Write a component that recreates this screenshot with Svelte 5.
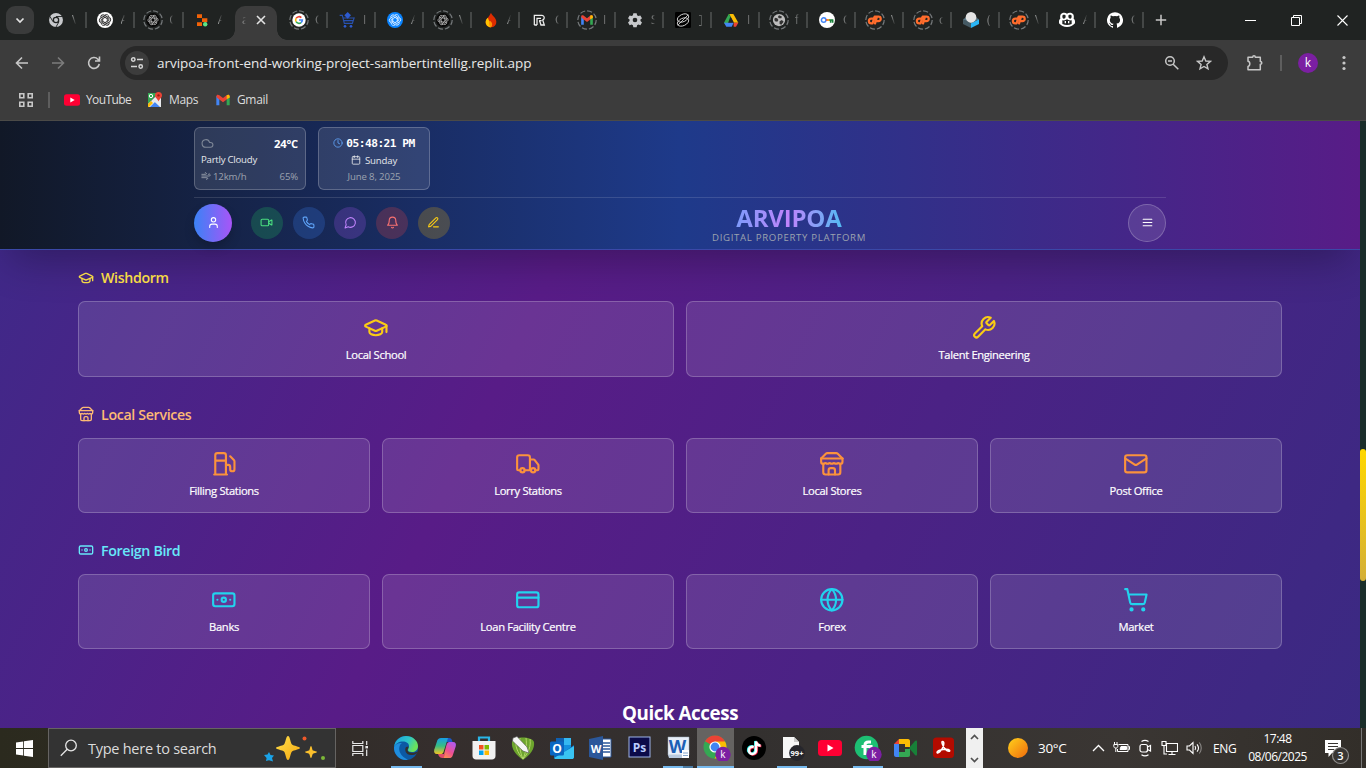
<script>
  const knot = (c, w = 1.3) => `<g fill="none" stroke="${c}" stroke-width="${w}" transform="translate(-1.8 -1.8) scale(1.150)">${[0, 60, 120, 180, 240, 300]
    .map((a) => `<path transform="rotate(${a} 12 12)" d="M12 5.600c2-1.600 5-.2 5 2.600v4.400l-5 2.800"/>`)
    .join('')}</g>`;
  const cp = `<path fill="none" stroke="#ff6c2c" stroke-width="2.800" stroke-linecap="round" stroke-linejoin="round" transform="translate(-2.200 -1.600) scale(1.200)" d="M9.400 9.600H7.200a3 3 0 0 0 0 6h1.600l2.600-8.400h4.800a2.700 2.700 0 0 1 0 5.600h-1.900M14.200 7.400l-2.300 8.200"/>`;
  const gmail = `<path fill="#4285f4" d="M2 20V6l4.500 3.500V20z"/><path fill="#34a853" d="M22 20V6l-4.500 3.500V20z"/><path fill="#ea4335" d="M2 6.500C2 4 4.500 3.300 6.500 4.800L12 9l5.500-4.200C19.500 3.300 22 4 22 6.500l-1 2.200-9 6.800-9-6.800z"/><path fill="#fbbc04" d="M22 6.500c0-2.500-2.500-3.200-4.500-1.700v5.700L22 8.500z"/>`;
  const chrome = (a, b, c, d, m) => `<circle cx="12" cy="12" r="11.500" fill="${b}"/><path fill="${a}" d="M12 12 2 6.250a11.500 11.500 0 0 1 20 0z"/><path fill="${c}" d="M12 6.500h10.100A11.500 11.500 0 0 1 11.500 23.500l5.300-9z"/><circle cx="12" cy="12" r="5.600" fill="${m}"/><circle cx="12" cy="12" r="4.400" fill="${d}"/>`;

  const fav = {
    chrome: `<circle cx="12" cy="12" r="7.700" fill="none" stroke="#c7c9cc" stroke-width="5.500"/><circle cx="12" cy="12" r="3" fill="#c7c9cc"/><path d="M12 6.800h9.500M7.500 14.600 2.800 6.400M16.500 14.600 11.800 22.800" stroke="#202322" stroke-width="1.400"/>`,
    gptw: `<circle cx="12" cy="12" r="12" fill="#fff"/>${knot('#333')}`,
    gptd: `<circle cx="12" cy="12" r="12" fill="#080808"/>${knot('#b5b5b5', 1.3)}`,
    gptb: `<circle cx="12" cy="12" r="12" fill="#0a84ff"/>${knot('#fff', 1)}`,
    replit: `<path fill="#f26207" d="M4.500 3.500H12V9H4.500zM12 9.500h8V15h-8zM4.500 15.500H12V21H4.500z"/><circle cx="16.800" cy="18.300" r="3.300" fill="#5be584"/>`,
    google: `<circle cx="12" cy="12" r="11.500" fill="#fff"/><g fill="none" stroke-width="2.800"><path stroke="#ea4335" d="M7 9.200a5.700 5.700 0 0 1 9-1.200"/><path stroke="#fbbc05" d="M7 14.800a5.700 5.700 0 0 1 0-5.600"/><path stroke="#34a853" d="M15.500 16.500A5.700 5.700 0 0 1 7 14.800"/><path stroke="#4285f4" d="M12 12h5.700a5.700 5.700 0 0 1-2.200 4.500"/></g>`,
    cart: `<path fill="none" stroke="#2851ae" stroke-width="1.700" d="M1 5h4l3 12h12l3-9M6.500 9h16M7.500 13h14"/><path fill="#2d5bd1" d="M13 0l5 5-5 5-5-5z"/><circle cx="9" cy="21.500" r="2" fill="#2d5bd1"/><circle cx="18" cy="21.500" r="2" fill="#2d5bd1"/>`,
    fire: `<path fill="#dd2c00" d="M12 1c1 4 8 7 8 13.500A8 8 0 0 1 12 23c-5 0-8-3.500-8-7.500C4 10 9 8 12 1z"/><path fill="#ffc400" d="M4 15c0-3 1.500-5 3.500-6.500C8 13 12 15 12 23c-5 0-8-4-8-8z"/><path fill="#ff9100" d="M10 13c4 2 5 6 2 10-3-1-4-7-2-10z"/>`,
    r: `<path fill="none" stroke="#eee" stroke-width="1.900" d="M5 19.500V5h11.500a3.500 3.500 0 0 1 3 5c-.6 1.500-2 2-2 2l2.500 7.500h-5l-2-6h-1M9 19.500v-10h6M5 19.500h4M12.500 13h3.500"/>`,
    gmail,
    gear: `<path fill="#c7c9cc" fill-rule="evenodd" d="M9.500 2h5l.6 3 2 1.100 2.900-1 2.500 4.300-2.300 2v2.200l2.300 2-2.500 4.300-2.900-1-2 1.100-.6 3h-5l-.6-3-2-1.100-2.900 1-2.500-4.300 2.300-2v-2.200l-2.300-2L4 5.100l2.900 1 2-1.100zM12 8.500a3.500 3.500 0 1 0 0 7 3.500 3.500 0 0 0 0-7z"/>`,
    sq: `<rect width="24" height="24" rx="2" fill="#000"/><g fill="none" stroke="#ddd" stroke-width="1.300"><ellipse cx="12" cy="9" rx="9" ry="5.500" transform="rotate(-25 12 9)"/><ellipse cx="12" cy="15" rx="9" ry="5.500" transform="rotate(-25 12 15)"/><path d="M4 20 20 4"/></g>`,
    drive: `<path fill="#34a853" d="M8.500 3h4L6 21 1.500 16z"/><path fill="#188038" d="M8.500 3h7l-3.500 6z"/><path fill="#fbbc04" d="M15.500 3l7.500 13h-6.500L9.500 3z"/><path fill="#4285f4" d="M1.500 16H16l-3 6H5z"/><path fill="#ea4335" d="M16 16h7l-3.500 6H16z"/><path fill="#202322" d="M12 9l3.500 6.500h-7z"/>`,
    globe: `<circle cx="12" cy="12" r="10.500" fill="#bdbdbd"/><path fill="#333" d="M5 8l4 1 2 3-2 3-4-1-1-3zM12 4l5 2-1 3-4 0-2-2zM13 14l4-2 3 3-4 5-3-1z"/>`,
    key: `<circle cx="12" cy="12" r="12" fill="#fff"/><circle cx="7" cy="12" r="3.400" fill="none" stroke="#4285f4" stroke-width="2.200"/><path d="M10.500 12h5" stroke="#ea4335" stroke-width="2.400"/><path d="M15 12h6.500M17.500 12v4M20.500 12v4" stroke="#188038" stroke-width="2.400"/><path d="M13 12h2.500" stroke="#fbbc04" stroke-width="2.400"/>`,
    cp,
    hex: `<path fill="#455a64" d="M0 11l12 6v7L0 18z"/><path fill="#29b6f6" d="M12 17l12-6v7l-12 6z"/><path fill="#607d8b" d="M0 11l12-7 12 7-12 6z"/><circle cx="12" cy="8" r="8" fill="#e4e4e4"/>`,
    copilot: `<path fill="#fff" d="M3 3c3-3 7-2 9-.5C14 1 18 0 21 3c1.500 2 1.500 5 1 7 1.500 1 2 2.500 2 4v3c-3 3.500-7 5.500-12 5.500S3 20.500 0 17v-3c0-1.500.5-3 2-4-.5-2-.5-5 1-7z"/><path fill="#202322" d="M5.500 4.500c2-1 4.500-.5 4.500 1.500 0 3-1 4-3 4S4.500 6.500 5.500 4.500zM18.500 4.500C16.500 3.500 14 4 14 6c0 3 1 4 3 4s2.500-3.500 1.500-5.500zM5 12.500c3 .5 5 0 7-1.500 2 1.500 4 2 7 1.500v5.500c-4 2-10 2-14 0z"/><path d="M9.500 13.500v3.500M14.500 13.500v3.500" stroke="#fff" stroke-width="2"/>`,
    github: `<path fill="#fff" d="M12 .3a12 12 0 0 0-3.800 23.400c.6.100.8-.3.800-.6v-2c-3.300.7-4-1.600-4-1.600-.6-1.400-1.400-1.800-1.400-1.800-1-.7.1-.7.100-.7 1.200 0 1.900 1.200 1.900 1.200 1 1.800 2.800 1.300 3.500 1 0-.8.4-1.300.7-1.600-2.700-.3-5.500-1.300-5.500-6 0-1.200.5-2.300 1.300-3.100-.2-.4-.6-1.600 0-3.200 0 0 1-.3 3.400 1.200a11.500 11.500 0 0 1 6 0c2.300-1.500 3.300-1.200 3.300-1.200.6 1.600.2 2.800 0 3.200.9.800 1.300 1.900 1.300 3.200 0 4.600-2.800 5.600-5.500 5.900.5.400.9 1 .9 2.200v3.300c0 .3.100.7.800.6A12 12 0 0 0 12 .3"/>`
  };

  const tabsLeft = [['chrome', 'V'], ['gptw', 'A'], ['gptd', 'C', 1], ['replit', 'A']];
  const tabsRight = [
    ['google', 'C', 1], ['cart', 'I'], ['gptb', 'A'], ['gptd', 'V', 1], ['fire', 'A'], ['r', 'C'], ['gmail', 'I', 1],
    ['gear', 'S'], ['sq', ']'], ['drive', 'I'], ['globe', 'f', 1], ['key', 'C'], ['cp', 'V', 1], ['cp', 'c', 1],
    ['hex', '('], ['cp', 'V', 1], ['copilot', 'A'], ['github', 'C']
  ];

  const ic = {
    cap: `<path d="M21.420 10.922a1 1 0 0 0-.019-1.838L12.830 5.180a2 2 0 0 0-1.660 0L2.600 9.080a1 1 0 0 0 0 1.832l8.570 3.908a2 2 0 0 0 1.660 0z"/><path d="M22 10v6"/><path d="M6 12.500V16a6 3 0 0 0 12 0v-3.500"/>`,
    wrench: `<path d="M14.700 6.300a1 1 0 0 0 0 1.400l1.600 1.600a1 1 0 0 0 1.400 0l3.770-3.770a6 6 0 0 1-7.940 7.940l-6.910 6.910a2.120 2.120 0 0 1-3-3l6.910-6.910a6 6 0 0 1 7.940-7.940l-3.760 3.760z"/>`,
    store: `<path d="m2 7 4.410-4.410A2 2 0 0 1 7.830 2h8.340a2 2 0 0 1 1.420.590L22 7"/><path d="M4 12v8a2 2 0 0 0 2 2h12a2 2 0 0 0 2-2v-8"/><path d="M15 22v-4a2 2 0 0 0-2-2h-2a2 2 0 0 0-2 2v4"/><path d="M2 7h20"/><path d="M22 7v3a2 2 0 0 1-2 2a2.700 2.700 0 0 1-1.590-.630.700.700 0 0 0-.820 0A2.700 2.700 0 0 1 16 12a2.700 2.700 0 0 1-1.590-.630.700.700 0 0 0-.820 0A2.700 2.700 0 0 1 12 12a2.700 2.700 0 0 1-1.590-.630.700.700 0 0 0-.820 0A2.700 2.700 0 0 1 8 12a2.700 2.700 0 0 1-1.590-.630.700.700 0 0 0-.820 0A2.700 2.700 0 0 1 4 12a2 2 0 0 1-2-2V7"/>`,
    fuel: `<path d="M3 22h12M4 9h10M14 22V4a2 2 0 0 0-2-2H6a2 2 0 0 0-2 2v18"/><path d="M14 13h2a2 2 0 0 1 2 2v2a2 2 0 0 0 4 0V9.830a2 2 0 0 0-.590-1.420L18 5"/>`,
    truck: `<path d="M14 18V6a2 2 0 0 0-2-2H4a2 2 0 0 0-2 2v11a1 1 0 0 0 1 1h2M15 18H9M19 18h2a1 1 0 0 0 1-1v-3.650a1 1 0 0 0-.220-.624l-3.480-4.350A1 1 0 0 0 17.520 8H14"/><circle cx="17" cy="18" r="2"/><circle cx="7" cy="18" r="2"/>`,
    mail: `<rect width="20" height="16" x="2" y="4" rx="2"/><path d="m22 7-8.970 5.700a1.940 1.940 0 0 1-2.060 0L2 7"/>`,
    note: `<rect width="20" height="12" x="2" y="6" rx="2"/><circle cx="12" cy="12" r="2"/><path d="M6 12h.010M18 12h.010"/>`,
    card: `<rect width="20" height="14" x="2" y="5" rx="2"/><path d="M2 10h20"/>`,
    world: `<circle cx="12" cy="12" r="10"/><path d="M12 2a14.500 14.500 0 0 0 0 20 14.500 14.500 0 0 0 0-20M2 12h20"/>`,
    cart: `<circle cx="8" cy="21" r="1"/><circle cx="19" cy="21" r="1"/><path d="M2.050 2.050h2l2.660 12.420a2 2 0 0 0 2 1.580h9.780a2 2 0 0 0 1.950-1.570l1.650-7.430H5.120"/>`,
    cloud: `<path d="M17.500 19H9a7 7 0 1 1 6.710-9h1.790a4.500 4.500 0 1 1 0 9Z"/>`,
    clock: `<circle cx="12" cy="12" r="10"/><path d="M12 6v6l4 2"/>`,
    cal: `<path d="M8 2v4M16 2v4M3 10h18"/><rect width="18" height="18" x="3" y="4" rx="2"/>`,
    wind: `<path d="M12.800 19.600A2 2 0 1 0 14 16H2M17.500 8a2.500 2.500 0 1 1 2 4H2M9.800 4.400A2 2 0 1 1 11 8H2"/>`,
    user: `<path d="M19 21v-2a4 4 0 0 0-4-4H9a4 4 0 0 0-4 4v2"/><circle cx="12" cy="7" r="4"/>`,
    video: `<path d="m16 13 5.223 3.482a.5.5 0 0 0 .777-.416V7.870a.5.5 0 0 0-.752-.432L16 10.500"/><rect x="2" y="6" width="14" height="12" rx="2"/>`,
    phone: `<path d="M22 16.920v3a2 2 0 0 1-2.180 2 19.790 19.790 0 0 1-8.630-3.070 19.500 19.500 0 0 1-6-6 19.790 19.790 0 0 1-3.070-8.670A2 2 0 0 1 4.110 2h3a2 2 0 0 1 2 1.720 12.840 12.840 0 0 0 .7 2.810 2 2 0 0 1-.450 2.110L8.090 9.910a16 16 0 0 0 6 6l1.270-1.270a2 2 0 0 1 2.110-.450 12.840 12.840 0 0 0 2.810.7A2 2 0 0 1 22 16.920z"/>`,
    chat: `<path d="M7.900 20A9 9 0 1 0 4 16.100L2 22Z"/>`,
    bell: `<path d="M6 8a6 6 0 0 1 12 0c0 7 3 9 3 9H3s3-2 3-9M10.300 21a1.940 1.940 0 0 0 3.400 0"/>`,
    pen: `<path d="M12 20h9M16.376 3.622a1 1 0 0 1 3.002 3.002L7.368 18.635a2 2 0 0 1-.855.506l-2.872.838a.5.5 0 0 1-.62-.62l.838-2.872a2 2 0 0 1 .506-.854z"/>`,
    menu: `<path d="M4 12h16M4 6h16M4 18h16"/>`
  };

  const actions = [['video', 'green'], ['phone', 'blue'], ['chat', 'purple'], ['bell', 'red'], ['pen', 'yellow']];
  const sections = [
    { name: 'Wishdorm', icon: 'cap', tone: 'gold', items: [['cap', 'Local School'], ['wrench', 'Talent Engineering']] },
    { name: 'Local Services', icon: 'store', tone: 'orange', items: [['fuel', 'Filling Stations'], ['truck', 'Lorry Stations'], ['store', 'Local Stores'], ['mail', 'Post Office']] },
    { name: 'Foreign Bird', icon: 'note', tone: 'cyan', items: [['note', 'Banks'], ['card', 'Loan Facility Centre'], ['world', 'Forex'], ['cart', 'Market']] }
  ];

  const label = (t, x, y, s, c = '#fff', w = 700) =>
    `<text x="${x}" y="${y}" font-size="${s}" font-weight="${w}" fill="${c}" text-anchor="middle" font-family="Open Sans, sans-serif">${t}</text>`;
  const badge = `<circle cx="20" cy="19.500" r="7.700" fill="#7b1fa2"/>${label('k', 20, 23, 10, '#fff', 400)}`;
  const chromeC = chrome('#ea4335', '#34a853', '#fbbc04', '#4285f4', '#fff');
  const apps = [
    { on: 1, svg: `<defs><linearGradient id="e1" x1="0" y1="0" x2="1" y2=".4"><stop offset="0" stop-color="#1b9de2"/><stop offset=".6" stop-color="#2dc6c8"/><stop offset="1" stop-color="#6be35a"/></linearGradient></defs><circle cx="13" cy="13" r="12" fill="#0c59a4"/><path fill="url(#e1)" d="M1 12C2 5 7 1 13 1c7 0 12 5 12 10 0 4-3 6-6 6s-4-1-4-2 1-2 1-4c0-3-3-4.500-6-4.500C6 6.500 2.500 8.500 1 12z"/><path fill="#1f8ddd" d="M1 12c1.500-3 5-4.500 8-4-3 2-3.500 6-2 9.500 1.500 3.500 5 6 8 7.300C7 26 .5 19.500 1 12z"/><path fill="#33302f" d="M13 12c-2 3 0 8 5 8 2.500 0 4-.5 5.500-1.300l1-2.200c-2 1-3.500 1.200-5.500 1.200-3 0-4.500-1.200-4.500-2.700 0-1 1-2 1-3.500z"/>` },
    { svg: `<defs><linearGradient id="c1" x1="0" y1="0" x2="0" y2="1"><stop offset="0" stop-color="#169de6"/><stop offset=".5" stop-color="#37bd83"/><stop offset="1" stop-color="#f4c324"/></linearGradient><linearGradient id="c2" x1="0" y1="1" x2=".6" y2="0"><stop offset="0" stop-color="#ff9c42"/><stop offset=".5" stop-color="#f0508f"/><stop offset="1" stop-color="#b659e8"/></linearGradient></defs><path fill="#1b58c9" d="M11 3h6c2 0 3 1.500 3.500 4h-7z"/><path fill="url(#c1)" d="M9 3h7l-4.500 14c-.5 1.500-1.500 2-3 2H5c-2.500 0-3.500-2-2.700-4.500l3-9C6 4 7 3 9 3z"/><path fill="url(#c2)" d="M17.500 7H21c2.500 0 3.500 2 2.700 4.500l-3 9c-.7 2-1.700 2.500-3.700 2.500h-6l3.500-13c.5-2 1.500-3 3-3z"/><path fill="#e04c68" d="M6 19h7l-1.200 4C8.500 23.500 7 22 6 19z"/>` },
    { svg: `<path fill="none" stroke="#29b6e8" stroke-width="2.200" d="M8 8V2.500h10V8"/><path fill="#f1f1f1" d="M1.500 6h23v15c0 2-1.500 3.500-3.500 3.500H5c-2 0-3.500-1.500-3.500-3.500z"/><path fill="#f25022" d="M8 10h4.500v4.500H8z"/><path fill="#7fba00" d="M13.500 10H18v4.500h-4.500z"/><path fill="#00a4ef" d="M8 15.500h4.500V20H8z"/><path fill="#ffb900" d="M13.500 15.500H18V20h-4.500z"/>` },
    { svg: `<path fill="#6da52d" d="M13 25C6 20 1 14 2 7c2-6 20-6 22 0 1 7-4 13-11 18z"/><path fill="none" stroke="#b5d56a" stroke-width="1" d="M13 24C7 17 5 11 6 4M13 24C10 17 9 10 10 3M13 24c6-7 8-13 7-20M13 24c3-7 4-14 3-21"/><path fill="#f5f5f5" stroke="#555" stroke-width=".6" d="M3 3l4-1.500 10 10.500 2 6-6-2L2.500 6z"/>` },
    { svg: `<path fill="#1490df" d="M7 3h15v15H7z"/><path fill="#0f5fb0" d="M7 3h8v7H7z"/><path fill="#35b8f1" d="M15 3h7v7h-7z"/><path fill="#0a67b7" d="M5 10l10 7L25 10v13H5z"/><path fill="#39c4f3" d="M5 23l20-12v11c0 1.500-1 2-2 2H6z"/><rect x="1" y="6.500" width="14" height="14" rx="1.500" fill="#0a67c2"/>${label('O', 8, 17.800, 12)}` },
    { svg: `<path fill="#fff" stroke="#2b579a" d="M13 4h11v18H13z"/><path stroke="#2b579a" stroke-width="1.300" d="M15 8h8M15 11h8M15 14h8M15 17h8"/><path fill="#2b579a" d="M2 4l14-3v24L2 22z"/>${label('W', 9, 17.500, 11)}` },
    { svg: `<rect x="3" y="2" width="21" height="20" fill="#0b0b4a" stroke="#9db4e8"/>${label('Ps', 13.500, 16.500, 12, '#b9ccff')}` },
    { on: 1, stacked: 1, svg: `<path fill="#e8eef8" stroke="#9ab" stroke-width=".5" d="M3 2h21v18H3z"/><path fill="#b9c9de" d="M3 20h21l-1 3H4z"/>${label('W', 12.500, 17.500, 18, '#1c5fb5')}<path fill="#fff" d="M17 15h7v8h-7z"/><path stroke="#87a6cc" d="M18 18h5M18 20.500h5"/>` },
    { on: 1, active: 1, svg: `${chromeC}${badge}` },
    { svg: `<circle cx="13" cy="13" r="12" fill="#000"/><g fill="none" stroke-width="2.500"><path stroke="#25f4ee" d="M12 11.500a3.600 3.600 0 1 0 2.300 3.500V6c.5 2.500 2 4 4.500 4"/><path stroke="#fe2c55" d="M13.500 12.500a3.600 3.600 0 1 0 2.300 3.500V7c.5 2.500 2 4 4.500 4"/><path stroke="#fff" d="M12.700 12a3.600 3.600 0 1 0 2.300 3.500V6.500c.5 2.500 2 4 4.500 4"/></g>` },
    { on: 1, svg: `<path fill="#f7f7f7" d="M4 2h11l5 5v16H4z"/><path fill="#ccc" d="M15 2v5h5z"/><circle cx="18" cy="18" r="7.900" fill="#26262c"/>${label('99+', 18, 20.800, 7.500)}` },
    { svg: `<rect x="1" y="5" width="24" height="16" rx="3.500" fill="#ff0033"/><path fill="#fff" d="M10.500 9.500v7l6-3.500z"/>` },
    { on: 1, svg: `<circle cx="12.500" cy="12.500" r="11.800" fill="#1dbf73"/><path fill="none" stroke="#fff" stroke-width="3" d="M17 7h-2.500c-2.500 0-3.500 1-3.500 3v10M7.500 11.500H17V19"/>${badge}` },
    { svg: `<path fill="#4285f4" d="M2 9h5v13H4c-1 0-2-1-2-2z"/><path fill="#ea4335" d="M2 9l5-5v5z"/><path fill="#fbbc04" d="M7 4h9c1.500 0 2 1 2 2v6h-5V9H7z"/><path fill="#34a853" d="M7 17h6v-3h5v6c0 1-.5 2-2 2H7z"/><path fill="#188038" d="M17 13l6-7c1-1 2-.5 2 .5v13c0 1-1 1.500-2 .5z"/>` },
    { svg: `<rect x="3" y="2.500" width="21" height="20.500" rx="3.500" fill="#b30b00"/><path fill="none" stroke="#fff" stroke-width="1.500" d="M12.500 6.500c2 0 1.500 3.500 0 6.500s-4 5.500-5 5-.5-2 3-3 8-1 9 .2-1.500 2-4-.7-4.500-8-3-8z"/>` }
  ];
</script>

{#snippet line(name, size, w = 2)}
  <svg width={size} height={size} viewBox="0 0 24 24" fill="none" stroke="currentColor" stroke-width={w} stroke-linecap="round" stroke-linejoin="round">{@html ic[name]}</svg>
{/snippet}

{#snippet tab(t)}
  <div class="tab">
    <span class="fav">
      {#if t[2]}<svg class="dash" width="20" height="20" viewBox="0 0 20 20"><circle cx="10" cy="10" r="9.200" fill="none" stroke="#75797b" stroke-width="1.200" stroke-dasharray="5.200 2" /></svg>{/if}
      <svg width={t[2] && t[0] !== 'cp' ? 14 : 16} height={t[2] && t[0] !== 'cp' ? 14 : 16} viewBox="0 0 24 24">{@html fav[t[0]]}</svg>
    </span>
    <span class="frag">{t[1]}</span>
  </div>
{/snippet}

<div class="screen">
  <div class="tabstrip">
    <button class="tabsearch" aria-label="Search tabs"><svg width="12" height="12" viewBox="0 0 12 12"><path d="M2.500 4.500 6 8l3.500-3.500" fill="none" stroke="#e3e3e3" stroke-width="1.700" /></svg></button>
    <div class="tabs first">{#each tabsLeft as t}{@render tab(t)}{/each}</div>
    <div class="current">
      <span class="frag">a</span>
      <svg width="10" height="10" viewBox="0 0 10 10"><path d="M1 1l8 8M9 1 1 9" stroke="#e3e3e3" stroke-width="1.600" /></svg>
    </div>
    <div class="tabs">{#each tabsRight as t}{@render tab(t)}{/each}</div>
    <svg class="plus" width="12" height="12" viewBox="0 0 12 12"><path d="M6 .8v10.400M.8 6h10.400" stroke="#c7c7c7" stroke-width="1.500" /></svg>
    <div class="winctl">
      <svg width="11" height="11" viewBox="0 0 11 11"><path d="M0 5.500h11" stroke="#fff" /></svg>
      <svg width="11" height="11" viewBox="0 0 11 11"><path d="M.5 2.500h8v8h-8zM2.500 2.500v-2h8v8h-2" fill="none" stroke="#fff" /></svg>
      <svg width="11" height="11" viewBox="0 0 11 11"><path d="M.5.5l10 10M10.500.5l-10 10" stroke="#fff" stroke-width="1.100" /></svg>
    </div>
  </div>

  <div class="toolbar">
    <div class="nav">
      <svg width="16" height="16" viewBox="0 0 16 16"><path d="M14 8H2.500M8 2.500 2.500 8 8 13.500" fill="none" stroke="#c7c7c7" stroke-width="1.600" /></svg>
      <svg width="16" height="16" viewBox="0 0 16 16"><path d="M2 8h11.500M8 2.500 13.500 8 8 13.500" fill="none" stroke="#7c7c7c" stroke-width="1.600" /></svg>
      <svg width="16" height="16" viewBox="0 0 16 16"><path d="M13.300 9A5.400 5.400 0 1 1 11.900 4.200L13.500 6M13.500 1.500V6H9" fill="none" stroke="#c7c7c7" stroke-width="1.600" /></svg>
    </div>
    <div class="omni">
      <span class="site"><svg width="14" height="14" viewBox="0 0 14 14" fill="none" stroke="#d5d5d5" stroke-width="1.500"><circle cx="3.300" cy="3.500" r="1.700" /><path d="M7 3.500h6M1 10.500h6" /><circle cx="10.700" cy="10.500" r="1.700" /></svg></span>
      <span class="url">arvipoa-front-end-working-project-sambertintellig.replit.app</span>
      <svg width="16" height="16" viewBox="0 0 16 16" fill="none" stroke="#c7c7c7" stroke-width="1.500"><circle cx="6" cy="6" r="4.300" /><path d="M9.200 9.200 14.300 14.300M4 6h4" /></svg>
      <svg class="star" width="16" height="16" viewBox="0 0 16 16"><path d="m8 1.800 1.800 4.200 4.600.4-3.500 3 1.100 4.500L8 11.500l-4 2.400 1.100-4.500-3.500-3L6.200 6z" fill="none" stroke="#c7c7c7" stroke-width="1.400" /></svg>
    </div>
    <svg class="ext" width="18" height="18" viewBox="0 0 18 18"><path d="M2 3.200h4.700c0-2 2.600-2 2.600 0H14.300v4.300c2 0 2 2.800 0 2.800v5.500H2v-3.300c2.400-.4 2.400-4.900 0-5.300z" fill="none" stroke="#c7c7c7" stroke-width="1.500" stroke-linejoin="round" /></svg>
    <i class="bar"></i>
    <span class="avatar">k</span>
    <svg class="dots" width="4" height="16" viewBox="0 0 4 16" fill="#c7c7c7"><circle cx="2" cy="2.500" r="1.600" /><circle cx="2" cy="8" r="1.600" /><circle cx="2" cy="13.500" r="1.600" /></svg>
  </div>

  <div class="bookmarks">
    <svg class="apps" width="14" height="14" viewBox="0 0 14 14"><path d="M.8.800h4v4h-4zM9.200.800h4v4h-4zM.8 9.200h4v4h-4zM9.200 9.200h4v4h-4z" fill="none" stroke="#c7c7c7" stroke-width="1.600" /></svg>
    <i class="bar"></i>
    <svg width="16" height="16" viewBox="0 0 16 16"><rect y="2.200" width="16" height="11.600" rx="2.500" fill="#ff0033" /><path fill="#fff" d="M6.300 5.500v5L10.700 8z" /></svg>
    <span class="bk yt">YouTube</span>
    <svg width="16" height="16" viewBox="0 0 16 16"><path fill="#34a853" d="M1 1h10L1 12z" /><path fill="#e8eaed" d="M1 15V12L12 1h2v14z" /><path fill="#4285f4" d="M3 15l5-5 5 5z" /><path fill="#fbbc04" d="M1 12l3-3 2 2-4 4H1z" /><path fill="#e8eaed" d="M8 10l3-2 3 5v2z" /><circle cx="4" cy="4" r="1.700" fill="none" stroke="#fff" /><path fill="#ea4335" d="M11.500 0a3.500 3.500 0 0 1 3.500 3.500c0 2.500-2.500 3-3.500 6-1-3-3.500-3.500-3.500-6A3.500 3.500 0 0 1 11.500 0z" /><circle cx="11.500" cy="3.400" r="1.200" fill="#9b1c12" /></svg>
    <span class="bk mp">Maps</span>
    <svg width="16" height="16" viewBox="0 0 24 24">{@html gmail}</svg>
    <span class="bk">Gmail</span>
  </div>

  <div class="view">
    <div class="page">
      <header>
        <div class="inner">
          <div class="widgets">
            <div class="wx">
              <div class="r1"><span class="gray">{@render line('cloud', 13)}</span><b>24°C</b></div>
              <div class="r2">Partly Cloudy</div>
              <div class="r3"><span>{@render line('wind', 10)}12km/h</span><span>65%</span></div>
            </div>
            <div class="clk">
              <div class="time"><span>{@render line('clock', 10)}</span>05:48:21 PM</div>
              <div class="day">{@render line('cal', 10)}Sunday</div>
              <div class="date">June 8, 2025</div>
            </div>
          </div>
          <div class="row">
            <div class="left">
              <span class="me">{@render line('user', 13)}</span>
              {#each actions as a}<span class="act {a[1]}">{@render line(a[0], 13)}</span>{/each}
            </div>
            <div class="brand"><h1>ARVIPOA</h1><p>DIGITAL PROPERTY PLATFORM</p></div>
            <span class="menu">{@render line('menu', 13)}</span>
          </div>
        </div>
      </header>

      <main>
        {#each sections as s}
          <section class={s.tone}>
            <h3>{@render line(s.icon, 16)}<span>{s.name}</span></h3>
            <div class="grid" class:two={s.items.length === 2}>
              {#each s.items as item}
                <div class="card">{@render line(item[0], 25.6)}<span>{item[1]}</span></div>
              {/each}
            </div>
          </section>
        {/each}
        <h2>Quick Access</h2>
      </main>
    </div>
    <div class="track"><div class="thumb"></div></div>
  </div>

  <div class="taskbar">
    <div class="start"><svg width="17" height="17" viewBox="0 0 17 17" fill="#fff"><path d="M0 2.500 7.200 1.400V8H0zM8 1.300 17 0v8H8zM0 8.900h7.200v6.700L0 14.500zM8 8.900h9V17l-9-1.300z" /></svg></div>
    <div class="search">
      <svg width="18" height="18" viewBox="0 0 18 18" fill="none" stroke="#e6e6e6" stroke-width="1.300"><circle cx="11" cy="6.500" r="5.300" /><path d="M7.200 10.300.8 16.700" /></svg>
      <span>Type here to search</span>
      <svg class="spark" width="62" height="28" viewBox="0 0 62 28"><defs><linearGradient id="sp" x1="0" y1="0" x2="1" y2="1"><stop offset="0" stop-color="#ffe04d" /><stop offset="1" stop-color="#f5a80f" /></linearGradient></defs><path fill="url(#sp)" d="M24 2c2 0 2.500 7 4 8.500s8 2 8 3.500-6.500 2-8 3.500-2 8.500-4 8.500-2.500-7-4-8.500-8-2-8-3.500 6.500-2 8-3.500S22 2 24 2z" /><path fill="#fbc02d" d="M47 12c1 0 1 4 2 4.500s4 .7 4 1.500-3 1-4 1.800-1 4.200-2 4.200-1-3.500-2-4.200-4-1-4-1.800 3-1 4-1.500 1-4.500 2-4.500z" /><path fill="#1aa3e8" d="M5 18l1.500 3L10 21.500l-2 2.500 1 3.500-4-1.200-3 .7.600-3L0 21l3.500-.5z" /><circle cx="40.500" cy="4.500" r="2" fill="#f0592a" /><circle cx="59" cy="24" r="2" fill="#7cb838" /></svg>
    </div>
    <div class="tv"><svg width="17" height="17" viewBox="0 0 17 17" fill="none" stroke="#e8e8e8" stroke-width="1.200"><path d="M.8 1v2.500h10V1M.8 16v-2.500h10V16M.8 5.500h10v6H.8zM14.700 1v4M14.700 9.500V16" /><path d="M13.400 6h2.600v2.400h-2.600z" fill="#e8e8e8" stroke="none" /></svg></div>
    <div class="dock">
      {#each apps as a, i}
        <div class="app" class:wide={i < 8} class:active={a.active} class:on={a.on} class:stacked={a.stacked}>
          <svg width={a.svg.includes('7b1fa2') ? 28 : 26} height="26" viewBox="0 0 {a.svg.includes('7b1fa2') ? 28 : 26} 26">{@html a.svg}</svg>
        </div>
      {/each}
    </div>
    <div class="scroller">
      <svg width="9" height="6" viewBox="0 0 9 6"><path d="M1 5l3.500-3.500L8 5" fill="none" stroke="#505050" stroke-width="1.700" /></svg>
      <svg width="9" height="6" viewBox="0 0 9 6"><path d="M1 1l3.500 3.500L8 1" fill="none" stroke="#505050" stroke-width="1.700" /></svg>
    </div>
    <div class="sun"></div>
    <span class="temp">30°C</span>
    <div class="tray">
      <svg width="13" height="16" viewBox="0 0 13 16"><path d="M1 11l5.500-5.500L12 11" fill="none" stroke="#fff" stroke-width="1.300" /></svg>
      <svg width="17" height="16" viewBox="0 0 17 16" fill="none" stroke="#fff"><path d="M5.500 4.500h9.500v7H4.500V9M15.500 6.500h1v3h-1" /><path d="M8 6.500h5.500v3H7z" fill="#fff" /><path d="M1.500 2v2M4 2v2M.8 4.500h4v2c0 2-4 2-4 0zM2.800 8v4" /></svg>
      <svg width="15" height="18" viewBox="0 0 15 18" fill="none" stroke="#fff" stroke-width="1.200"><rect x="2" y="5.500" width="7.500" height="7.500" rx="2" /><path d="M9.500 8l3-1.500v5.500l-3-1.500M3.500 2.500c2-1.300 5-1.300 7 0M3.500 15.800c2 1.300 5 1.300 7 0" /></svg>
      <svg width="17" height="16" viewBox="0 0 17 16" fill="none" stroke="#fff" stroke-width="1.100"><path d="M5.500 3.500h11v8h-11zM11 11.500v3M7.500 14.500h7M1 1.500h4v4H1zM3 5.500v8.500h3" /></svg>
      <svg width="17" height="16" viewBox="0 0 17 16" fill="none" stroke="#fff" stroke-width="1.100"><path d="M1 6h2.500L7 2.500v11L3.500 10H1zM9 6c.8 1.200.8 2.800 0 4M11 4.300c1.800 2.200 1.800 5.200 0 7.400" /><path d="M13.300 2.500c2.600 3.200 2.600 7.800 0 11" stroke="#8b8987" /></svg>
      <span class="lang">ENG</span>
    </div>
    <div class="dt"><span>17:48</span><span>08/06/2025</span></div>
    <div class="notif"><svg width="25" height="26" viewBox="0 0 25 26"><path fill="#fff" d="M0 1h16v13H7l-3.500 4v-4H0z" /><path d="M3 4.500h10M3 7.500h10M3 10.500h6" stroke="#383532" /><circle cx="15.500" cy="16.500" r="8" fill="#383532" stroke="#8f8d8b" stroke-width="1.200" /><text x="15.500" y="20.500" font-size="11" font-weight="600" fill="#fff" text-anchor="middle" font-family="Open Sans, sans-serif">3</text></svg></div>
    <i class="peek"></i>
  </div>
</div>

<style>
  :global(body) { margin: 0; background: #202322; }
  * { box-sizing: border-box; }
  svg { display: block; flex: none; }
  h1, h2, h3, p { margin: 0; }
  .screen { width: 1366px; height: 768px; overflow: hidden; display: flex; flex-direction: column; font-family: 'Open Sans', 'Noto Sans', sans-serif; background: #3c3c3c; color: #fff; }

  .tabstrip { height: 40px; flex: none; display: flex; align-items: center; background: #202322; }
  .tabsearch { width: 28px; height: 28px; margin: 0 4px 0 6px; padding: 0; border: 0; border-radius: 9px; background: #3a3b3b; display: grid; place-items: center; }
  .tabs { display: flex; }
  .tab { width: 48px; height: 16px; display: flex; align-items: center; border-right: 2px solid #444746; padding-left: 9px; }
  .first .tab { width: 48.600px; }
  .first .tab:last-child { border-color: transparent; }
  .fav { width: 20px; height: 20px; display: grid; place-items: center; position: relative; flex: none; }
  .first .fav { margin-right: -1px; left: -1px; }
  .dash { position: absolute; inset: 0; }
  .frag { width: 5px; margin-left: 6px; overflow: hidden; white-space: nowrap; font-size: 12px; line-height: 16px; color: #a5a7a7; -webkit-mask-image: linear-gradient(90deg, #000, transparent 80%); mask-image: linear-gradient(90deg, #000, transparent 80%); }
  .current { width: 42px; height: 34px; align-self: flex-end; margin: 0 3px 0 2.600px; border-radius: 10px 10px 0 0; background: #3c3c3c; display: flex; align-items: center; position: relative; padding-bottom: 6px; }
  .current::before, .current::after { content: ''; position: absolute; bottom: 0; width: 10px; height: 10px; }
  .current::before { left: -10px; background: radial-gradient(circle at 0 0, transparent 9.500px, #3c3c3c 10px); }
  .current::after { right: -10px; background: radial-gradient(circle at 100% 0, transparent 9.500px, #3c3c3c 10px); }
  .current .frag { margin: 0 9px 0 7px; }
  .plus { margin-left: 11px; }
  .winctl { display: flex; gap: 35px; margin-left: auto; padding-right: 18px; }

  .toolbar { height: 46px; flex: none; display: flex; align-items: center; background: #3c3c3c; }
  .nav { display: flex; gap: 20px; padding-left: 14px; }
  .omni { width: 1108px; height: 34px; margin-left: 18px; border-radius: 17px; background: #282828; display: flex; align-items: center; padding: 0 16px 0 5px; }
  .site { width: 24px; height: 24px; border-radius: 50%; background: #3c3c3c; display: grid; place-items: center; margin-right: 8px; }
  .url { flex: 1; font-size: 13.500px; letter-spacing: -0.040px; color: #e8e8e8; }
  .star { margin-left: 16px; }
  .ext { margin-left: 18px; }
  .bar { width: 2px; height: 16px; background: #5e5e5e; }
  .toolbar .bar { margin-left: 16px; }
  .avatar { width: 20px; height: 20px; border-radius: 50%; background: #7b1fa2; font-size: 12px; line-height: 19px; text-align: center; margin-left: 16px; }
  .dots { margin-left: 24px; }

  .bookmarks { height: 35px; flex: none; display: flex; align-items: center; padding: 0 0 7px 19px; font-size: 12px; color: #dcdcdc; border-bottom: 1px solid #4b4a47; }
  .bookmarks .bar { margin: 0 14px 0 15px; }
  .bk { margin-left: 6px; letter-spacing: -0.350px; }
  .yt { width: 46px; margin-right: 15px; letter-spacing: -0.600px; }
  .mp { width: 30px; margin-right: 16px; }

  .view { height: 607px; flex: none; display: flex; }
  .page { width: 1360px; overflow: hidden; background: linear-gradient(to bottom right, #1e3a8a, #581c87, #312e81) 0 -1508px / 1360px 2791px no-repeat; }
  .track { width: 6px; background: #1a2e2a; padding-top: 328px; }
  .thumb { height: 132px; border-radius: 3px; background: linear-gradient(#ffd700, #d4af37); }

  header { height: 129px; background: linear-gradient(90deg, #111827, #1e3a8a, #581c87); border-bottom: 1px solid #3b48a8; box-shadow: 0 20px 40px -10px rgba(0, 0, 0, 0.280); }
  .inner { width: 972px; margin: 0 0 0 194px; padding-top: 6px; }
  .widgets { display: flex; gap: 12px; height: 71px; border-bottom: 1px solid rgba(255, 255, 255, 0.130); }
  .wx, .clk { width: 112px; height: 63px; border: 1px solid rgba(255, 255, 255, 0.220); border-radius: 6px; background: rgba(255, 255, 255, 0.110); font-size: 9.600px; }
  .wx { padding: 7px 7px 0 6px; }
  .r1, .r3 { display: flex; justify-content: space-between; align-items: center; }
  .r1 { height: 16px; }
  .r1 b { font-size: 11.200px; letter-spacing: -0.200px; }
  .gray { color: #7e8797; }
  .r2 { height: 18px; line-height: 18px; letter-spacing: -0.230px; color: #e5e7eb; }
  .r3 { height: 14px; color: #9ca3af; letter-spacing: -0.150px; }
  .r3 span { display: flex; align-items: center; gap: 2px; }
  .clk { padding-top: 7px; }
  .clk div { display: flex; justify-content: center; align-items: center; gap: 4px; }
  .time { height: 16px; font: 700 11.200px 'DejaVu Sans Mono', 'Liberation Mono', monospace; letter-spacing: -0.520px; }
  .clk .time { gap: 3px; }
  .time span { color: #60a5fa; }
  .day { height: 18px; color: #e5e7eb; letter-spacing: -0.150px; }
  .date { height: 14px; color: #9ca3af; letter-spacing: -0.150px; }
  .row { height: 49px; display: flex; align-items: center; justify-content: space-between; }
  .left { display: flex; align-items: center; gap: 9.800px; }
  .me, .act, .menu { display: grid; place-items: center; border-radius: 50%; }
  .me { width: 38px; height: 38px; margin-right: 9px; background: linear-gradient(90deg, #3b82f6, #a855f7); box-shadow: 0 6px 12px -2px rgba(0, 0, 0, 0.250); }
  .act { width: 32px; height: 32px; }
  .green { color: #4ade80; background: rgba(34, 197, 94, 0.230); }
  .blue { color: #60a5fa; background: rgba(59, 130, 246, 0.230); }
  .purple { color: #c084fc; background: rgba(168, 85, 247, 0.230); }
  .red { color: #f87171; background: rgba(239, 68, 68, 0.230); }
  .yellow { color: #facc15; background: rgba(234, 179, 8, 0.230); }
  .brand { width: 154px; padding-top: 3px; text-align: center; }
  .brand h1 { font-size: 24px; line-height: 27px; font-weight: 700; letter-spacing: -0.200px; background: linear-gradient(90deg, #60a5fa, #c084fc, #22d3ee); -webkit-background-clip: text; background-clip: text; color: transparent; }
  .brand p { font-size: 9.600px; line-height: 13px; letter-spacing: 0.700px; white-space: nowrap; color: #9ca3af; }
  .menu { width: 38px; height: 38px; border: 1px solid rgba(255, 255, 255, 0.220); background: rgba(255, 255, 255, 0.110); }
  .menu svg { margin-left: 1px; }

  main { padding: 16.700px 78px 0; }
  section { height: 136.400px; }
  h3 { height: 22px; display: flex; align-items: center; gap: 7px; font-size: 14.200px; letter-spacing: -0.330px; font-weight: 600; margin-bottom: 12.500px; }
  .gold h3 { color: #f5da45; }
  .orange h3 { color: #fdba74; }
  .cyan h3 { color: #67e8f9; }
  .grid { display: grid; grid-template-columns: repeat(4, 1fr); gap: 12px; }
  .grid.two { grid-template-columns: 1fr 1fr; }
  .card { height: 75.350px; border: 1px solid rgba(255, 255, 255, 0.220); border-radius: 7px; background: rgba(255, 255, 255, 0.110); display: flex; flex-direction: column; align-items: center; padding-top: 12.500px; }
  .card span { font-size: 11.200px; line-height: 16px; margin-top: 6.300px; color: #fff; letter-spacing: -0.330px; font-weight: 500; -webkit-text-stroke: 0.200px #fff; }
  .gold .card { color: #facc15; }
  .orange .card { color: #fb923c; }
  .cyan .card { color: #22d3ee; }
  h2 { margin-top: 23.600px; text-align: center; font-size: 18.800px; line-height: 28px; font-weight: 700; letter-spacing: -0.430px; }

  .taskbar { height: 40px; flex: none; display: flex; align-items: center; background: linear-gradient(90deg, #2b2a1e, #302c27 20%, #352e2d 32%, #33302f 55%, #3a3633 82%, #322e29); }
  .start { width: 48px; display: grid; place-items: center; }
  .search { width: 288px; height: 40px; border: 1px solid #666462; background: #333; display: flex; align-items: center; padding: 0 9px 0 11px; font-size: 14.500px; color: #dcdcdc; }
  .search span { margin-left: 10px; flex: 1; white-space: nowrap; letter-spacing: -0.260px; }
  .tv { width: 51px; padding-left: 16px; }
  .dock { width: 579px; height: 40px; display: flex; }
  .app { width: 37.800px; height: 40px; display: grid; place-items: center; position: relative; }
  .app.wide { width: 38.800px; }
  .app.active { background: #656361; width: 37px; margin-right: 1px; }
  .app.on::after { content: ''; position: absolute; left: 4px; right: 4px; bottom: 0; height: 2px; background: #76b9ed; }
  .app.active::after { left: 0; right: 0; }
  .app.active svg { margin-left: 3px; }
  .app.stacked::after { background: linear-gradient(90deg, #76b9ed 68%, #4a7ba3 68%); }
  .scroller { width: 17px; height: 40px; background: #f0f0f0; display: flex; flex-direction: column; align-items: center; justify-content: space-between; padding: 6px 0 5px; }
  .sun { width: 20px; height: 20px; margin-left: 25px; border-radius: 50%; background: linear-gradient(135deg, #ffd21c, #f06a0c); }
  .temp { width: 44px; margin-left: 10px; font-size: 13.500px; letter-spacing: -0.300px; }
  .tray { display: flex; align-items: center; gap: 8px; margin-left: 10px; }
  .lang { font-size: 12px; letter-spacing: -0.300px; margin-left: 2px; }
  .dt { width: 72px; margin-left: 5px; display: flex; flex-direction: column; align-items: center; font-size: 12px; line-height: 18px; letter-spacing: -0.500px; }
  .notif { margin-left: 11px; padding-top: 8px; }
  .peek { width: 1px; height: 40px; background: #777; margin-left: auto; margin-right: 4px; }
</style>
